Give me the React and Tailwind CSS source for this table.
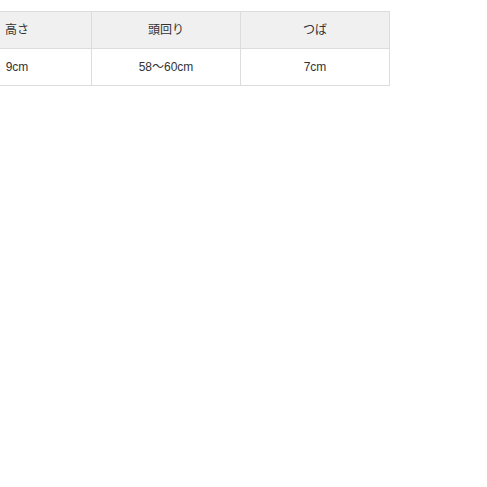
export default function App() {
  const font = { fontFamily: '"Liberation Sans", Arial, "Noto Sans CJK JP", sans-serif' };
  const head = ["高さ", "頭回り", "つば"];
  const body = ["9cm", "58〜60cm", "7cm"];
  return (
    <div className="w-[487px] h-[487px] bg-white overflow-hidden" style={font}>
      <div className="mt-[11px] ml-[-58px] w-[448px] grid grid-cols-[149px_149px_149px] border-t border-l border-[#dcdcdc] text-[12px] text-[#333]">
        {head.map((h) => (
          <div key={h} className="h-[37px] flex items-center justify-center bg-[#f0f0f0] border-r border-b border-[#dcdcdc]">
            {h}
          </div>
        ))}
        {body.map((b) => (
          <div key={b} className="h-[37px] flex items-center justify-center bg-white border-r border-b border-[#dcdcdc]">
            {b}
          </div>
        ))}
      </div>
    </div>
  );
}
